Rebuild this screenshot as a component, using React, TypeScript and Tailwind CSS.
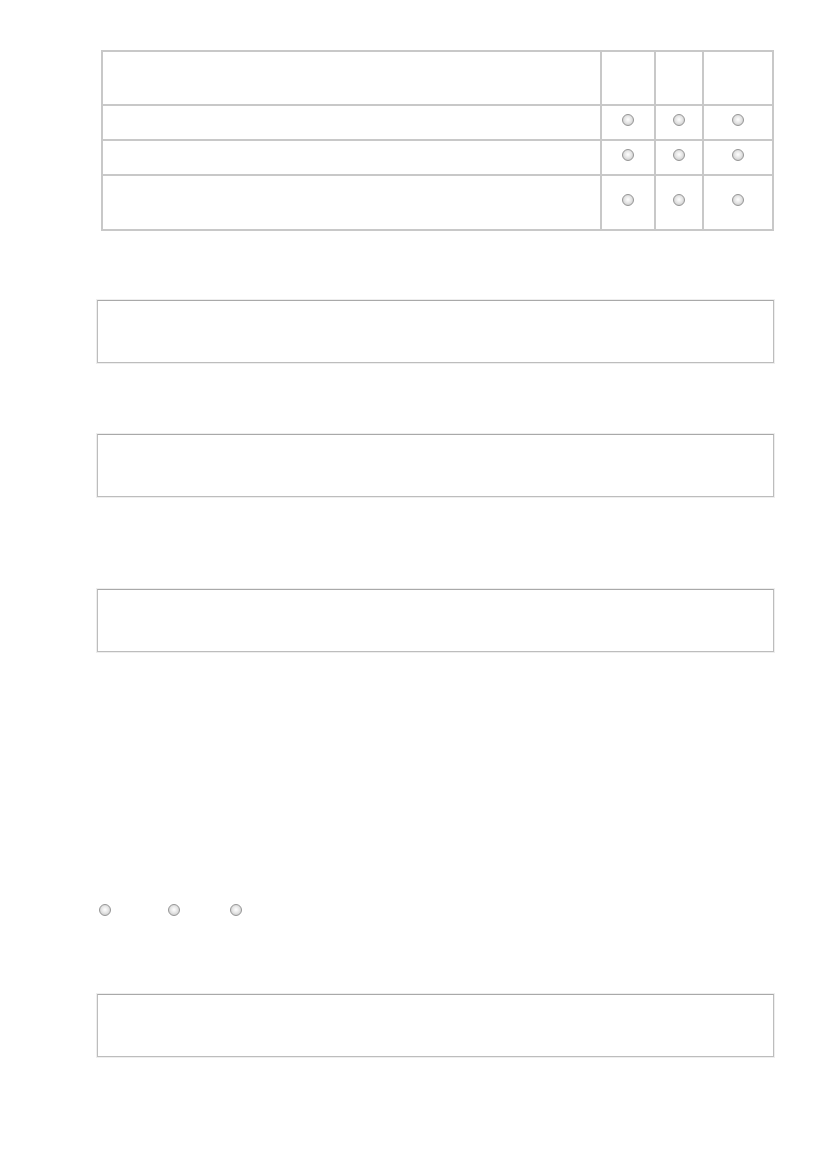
import React from 'react';

const Radio: React.FC = () => (
  <span className="block w-[12px] h-[12px] rounded-full border border-[#959595] bg-[radial-gradient(circle_at_50%_45%,#ffffff_0%,#e6e6e6_45%,#bdbdbd_100%)]" />
);

const rows = [
  { id: 1, h: 'h-[35px]' },
  { id: 2, h: 'h-[35px]' },
  { id: 3, h: 'h-[55px]' },
];

const TextBox: React.FC = () => (
  <div className="w-[677px] h-[63px] border border-[#bdbdbd] border-t-[#a9a9a9] bg-white shadow-[0_0_0_1px_#eeeeee]" />
);

const cell = 'border-r-2 border-b-2 border-[#c8c8c8]';

const App: React.FC = () => {
  return (
    <div className="min-h-[1169px] bg-white pt-[50px] pl-[97px] font-['Liberation_Sans',sans-serif]">
      {/* grid table */}
      <div className="ml-[4px] w-[673px] border-l-2 border-t-2 border-[#c8c8c8]">
        <div className="flex h-[54px]">
          <div className={`w-[500px] ${cell}`} />
          <div className={`w-[55px] ${cell}`} />
          <div className={`w-[48px] ${cell}`} />
          <div className={`w-[70px] ${cell}`} />
        </div>
        {rows.map((row) => (
          <div key={row.id} className={`flex ${row.h}`}>
            <div className={`w-[500px] ${cell}`} />
            <div className={`w-[55px] ${cell} flex items-center justify-center pb-[5px]`}>
              <Radio />
            </div>
            <div className={`w-[48px] ${cell} flex items-center justify-center pb-[5px]`}>
              <Radio />
            </div>
            <div className={`w-[70px] ${cell} flex items-center justify-center pb-[5px]`}>
              <Radio />
            </div>
          </div>
        ))}
      </div>

      <div className="mt-[69px]">
        <TextBox />
      </div>
      <div className="mt-[71px]">
        <TextBox />
      </div>
      <div className="mt-[92px]">
        <TextBox />
      </div>

      {/* inline radio group */}
      <div className="mt-[252px] flex items-center h-[12px] pl-[2px] gap-[57px]">
        <Radio />
        <div className="flex items-center gap-[50px]">
          <Radio />
          <Radio />
        </div>
      </div>

      <div className="mt-[78px]">
        <TextBox />
      </div>
    </div>
  );
};

export default App;
